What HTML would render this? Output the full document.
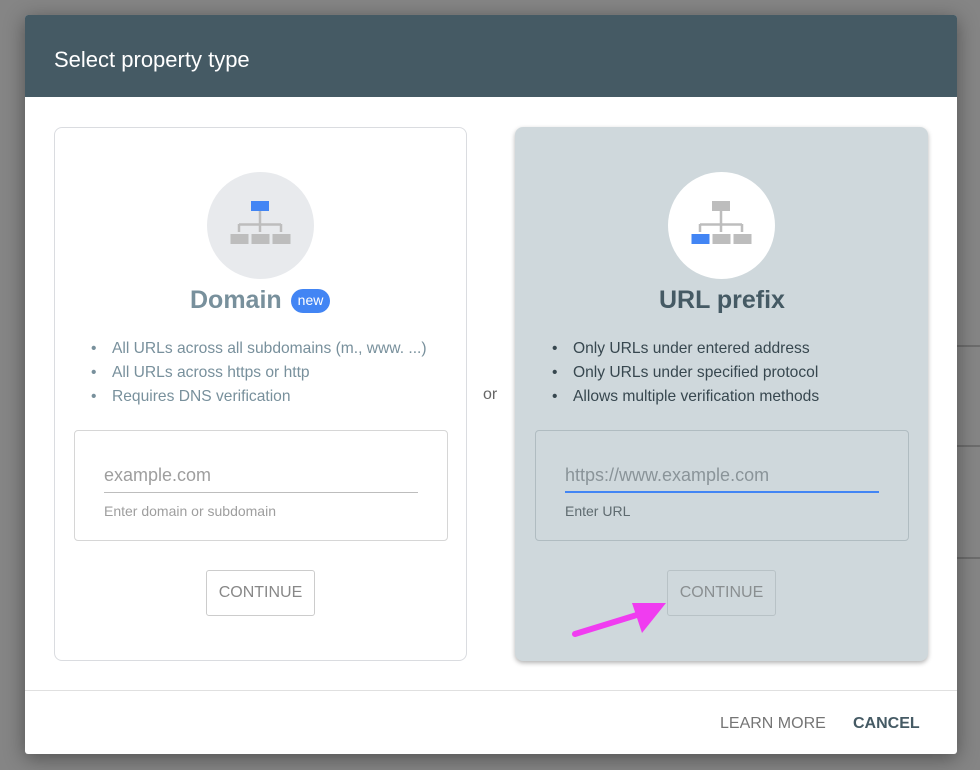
<!DOCTYPE html>
<html><head><meta charset="utf-8"><style>
*{margin:0;padding:0;box-sizing:border-box}
body{width:980px;height:770px;background:#858585;font-family:"Liberation Sans",Arial,sans-serif;position:relative;overflow:hidden}
.a{position:absolute}
.dlg{left:25px;top:15px;width:932px;height:739px;background:#fff;border-radius:3px;overflow:hidden;box-shadow:0 4px 20px rgba(0,0,0,.4)}
.hdr{left:0;top:0;width:932px;height:82px;background:#455a64}
.hdr span{position:absolute;left:29px;top:32px;color:#fff;font-size:22px}
.card{top:112px;width:413px;height:534px;border:1px solid #dadce0;border-radius:8px}
.circ{width:107px;height:107px;border-radius:50%}
ul{position:absolute;list-style:none;font-size:15.6px;line-height:24px}
ul li:before{content:"•";position:absolute;left:-21px}
.box{width:374px;height:111px;border:1px solid #d6d6d6;border-radius:4px}
.btn{width:109px;height:46px;border:1px solid #ccc;border-radius:3px;font-size:16px;color:#888;text-align:center;line-height:44px}
</style></head><body>
<div class="a" style="left:957px;top:345px;width:23px;height:2px;background:#6c6c6c"></div>
<div class="a" style="left:957px;top:445px;width:23px;height:2px;background:#6c6c6c"></div>
<div class="a" style="left:957px;top:557px;width:23px;height:2px;background:#6c6c6c"></div>
<div class="a dlg">
 <div class="a hdr"><span>Select property type</span></div>
 <div class="a card" style="left:29px;background:#fff">
  <div class="a circ" style="left:152px;top:44px;background:#e8eaed">
   <svg class="a" style="left:0;top:0" width="107" height="107" viewBox="0 0 107 107"><path d="M53 34v19M32 52v8M53 52v8M74 52v8M32 52.5h42" stroke="#bdbdbd" stroke-width="2.5" fill="none"/><rect x="44" y="29" width="18" height="10" fill="#4285f4"/><rect x="23.5" y="62" width="18" height="10" fill="#bdbdbd"/><rect x="44.5" y="62" width="18" height="10" fill="#bdbdbd"/><rect x="65.5" y="62" width="18" height="10" fill="#bdbdbd"/></svg>
  </div>
  <div class="a" style="left:135px;top:158px;font-size:25px;font-weight:bold;color:#78909c">Domain</div>
  <div class="a" style="left:236px;top:161px;width:39px;height:24px;border-radius:12px;background:#4285f4;color:#fff;font-size:14px;text-align:center;line-height:23px">new</div>
  <ul style="left:57px;top:209px;color:#78909c"><li>All URLs across all subdomains (m., www. ...)</li><li>All URLs across https or http</li><li>Requires DNS verification</li></ul>
  <div class="a box" style="left:19px;top:302px">
   <div class="a" style="left:29px;top:34px;font-size:18px;color:#9e9e9e">example.com</div>
   <div class="a" style="left:29px;top:61px;width:314px;height:1px;background:#bdbdbd"></div>
   <div class="a" style="left:29px;top:72px;font-size:14px;color:#9e9e9e">Enter domain or subdomain</div>
  </div>
  <div class="a btn" style="left:151px;top:442px">CONTINUE</div>
 </div>
 <div class="a" style="left:458px;top:371px;font-size:16px;color:#666">or</div>
 <div class="a card" style="left:490px;background:#cfd8dc;border-color:#cfd8dc;box-shadow:0 2px 5px rgba(0,0,0,.3)">
  <div class="a circ" style="left:152px;top:44px;background:#fff">
   <svg class="a" style="left:0;top:0" width="107" height="107" viewBox="0 0 107 107"><path d="M53 34v19M32 52v8M53 52v8M74 52v8M32 52.5h42" stroke="#bdbdbd" stroke-width="2.5" fill="none"/><rect x="44" y="29" width="18" height="10" fill="#bdbdbd"/><rect x="23.5" y="62" width="18" height="10" fill="#4285f4"/><rect x="44.5" y="62" width="18" height="10" fill="#bdbdbd"/><rect x="65.5" y="62" width="18" height="10" fill="#bdbdbd"/></svg>
  </div>
  <div class="a" style="left:143px;top:158px;font-size:25px;font-weight:bold;color:#455a64">URL prefix</div>
  <ul style="left:57px;top:209px;color:#37474f"><li>Only URLs under entered address</li><li>Only URLs under specified protocol</li><li>Allows multiple verification methods</li></ul>
  <div class="a box" style="left:19px;top:302px;border-color:#b0bcc1">
   <div class="a" style="left:29px;top:34px;font-size:18px;color:#8a9499">https://www.example.com</div>
   <div class="a" style="left:29px;top:60px;width:314px;height:2px;background:#4285f4"></div>
   <div class="a" style="left:29px;top:72px;font-size:14px;color:#5f6b70">Enter URL</div>
  </div>
  <div class="a btn" style="left:151px;top:442px;border-color:#b8c2c6;color:#8a8f91">CONTINUE</div>
 </div>
 <div class="a" style="left:0;top:675px;width:932px;height:1px;background:#e0e0e0"></div>
 <div class="a" style="left:695px;top:700px;font-size:16px;color:#757575">LEARN MORE</div>
 <div class="a" style="left:828px;top:700px;font-size:16px;color:#455a64;font-weight:bold">CANCEL</div>
</div>
<svg class="a" style="left:0;top:0" width="980" height="770"><path d="M575 634L640 614" stroke="#f03cf0" stroke-width="6" stroke-linecap="round"/><path d="M666 603L632 603L642 633Z" fill="#f03cf0"/></svg>
</body></html>
